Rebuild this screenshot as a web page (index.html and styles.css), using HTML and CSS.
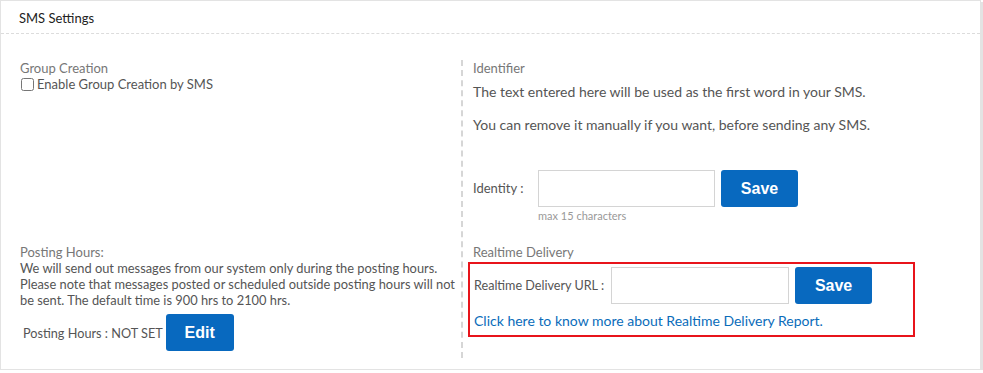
FILE: index.html
```html
<!DOCTYPE html>
<html lang="en">
<head>
    <meta charset="UTF-8">
    <meta name="viewport" content="width=device-width, initial-scale=1.0">
    <title>SMS Settings</title>
    <link rel="stylesheet" href="styles.css">
</head>
<body>
    <div class="panel">
        <div class="panel-header">SMS Settings</div>

        <div class="panel-body">
            <div class="col col-left">
                <div class="section section-top">
                    <div class="label">Group Creation</div>
                    <label class="check">
                        <input type="checkbox">
                        <span>Enable Group Creation by SMS</span>
                    </label>
                </div>

                <div class="section">
                    <div class="label">Posting Hours:</div>
                    <p class="text">We will send out messages from our system only during the posting hours. Please note that messages posted or scheduled outside posting hours will not be sent. The default time is 900 hrs to 2100 hrs.</p>
                    <div class="row row-hours">
                        <span class="row-label">Posting Hours : NOT SET</span>
                        <button class="btn btn-edit">Edit</button>
                    </div>
                </div>
            </div>

            <div class="col col-right">
                <div class="section section-top">
                    <div class="label">Identifier</div>
                    <p class="text note">The text entered here will be used as the first word in your SMS.</p>
                    <p class="text note">You can remove it manually if you want, before sending any SMS.</p>
                    <div class="row row-identity">
                        <span class="row-label identity-label">Identity :</span>
                        <div class="field">
                            <input type="text" class="input">
                            <div class="hint">max 15 characters</div>
                        </div>
                        <button class="btn">Save</button>
                    </div>
                </div>

                <div class="section">
                    <div class="label">Realtime Delivery</div>
                    <div class="highlight">
                        <div class="row">
                            <span class="row-label url-label">Realtime Delivery URL :</span>
                            <input type="text" class="input">
                            <button class="btn">Save</button>
                        </div>
                        <a href="#" class="link">Click here to know more about Realtime Delivery Report.</a>
                    </div>
                </div>
            </div>
        </div>
    </div>
</body>
</html>
```

FILE: styles.css
```css
body {
    margin: 0;
    font-family: Lato, 'Open Sans', sans-serif;
    font-size: 13px;
    line-height: 16px;
    color: #555;
    background: #fff;
}
.panel {
    width: 981px;
    height: 370px;
    box-sizing: border-box;
    border: 1px solid #e3e3e3;
    box-shadow: 2px 2px 0 #e3e3e3;
}
.panel-header {
    padding: 9px 18px 7px;
    color: #222;
    border-bottom: 1px dashed #dcdcdc;
}
.panel-body {
    display: flex;
    padding: 26px 0 0 19px;
}
.col {
    display: flex;
    flex-direction: column;
    height: 298px;
}
.col-left {
    width: 441px;
}
.col-right {
    flex: 1;
    border-left: 2px dashed #d6d6d6;
    padding-left: 10px;
}
.section-top {
    height: 184px;
}
.label {
    color: #777;
}
.check {
    display: flex;
    align-items: center;
    color: #555;
}
.check input {
    width: 13px;
    height: 13px;
    margin: 0 3px 0 1px;
}
.text {
    margin: 0;
    color: #555;
}
.col-left .text {
    font-size: 12.85px;
}
.note {
    font-size: 14px;
    margin-top: 8px;
    margin-bottom: 17px;
}
.row {
    display: flex;
    align-items: center;
}
.row-label {
    color: #555;
}
.row-hours {
    margin-top: 6px;
    padding-left: 3px;
}
.row-hours .row-label {
    font-size: 12.7px;
    margin-right: 3px;
}
.row-identity {
    align-items: flex-start;
    margin-top: 37px;
}
.identity-label {
    width: 65px;
    line-height: 37px;
}
.url-label {
    font-size: 12.6px;
    margin-right: 7px;
}
.input {
    box-sizing: border-box;
    height: 37px;
    width: 178px;
    margin: 0;
    border: 1px solid #d4d4d4;
    border-radius: 0;
    padding: 0 6px;
}
.field .input {
    width: 177px;
    display: block;
}
.hint {
    margin-top: 2px;
    font-size: 11px;
    line-height: 13px;
    color: #999;
}
.btn {
    box-sizing: border-box;
    height: 37px;
    width: 77px;
    margin-left: 6px;
    border: none;
    border-radius: 3px;
    background: #0869bf;
    color: #fff;
    font-family: 'Liberation Sans', Arial, sans-serif;
    font-size: 16px;
    font-weight: bold;
    cursor: pointer;
}
.btn-edit {
    width: 68px;
    margin-left: 0;
}
.highlight {
    margin: 2px 0 0 -5px;
    width: 447px;
    box-sizing: border-box;
    border: 2px solid #e8141b;
    padding: 3px 4px 6px 4px;
}
.link {
    display: block;
    margin-top: 9px;
    font-size: 14px;
    color: #0a6cba;
    text-decoration: none;
}
```
